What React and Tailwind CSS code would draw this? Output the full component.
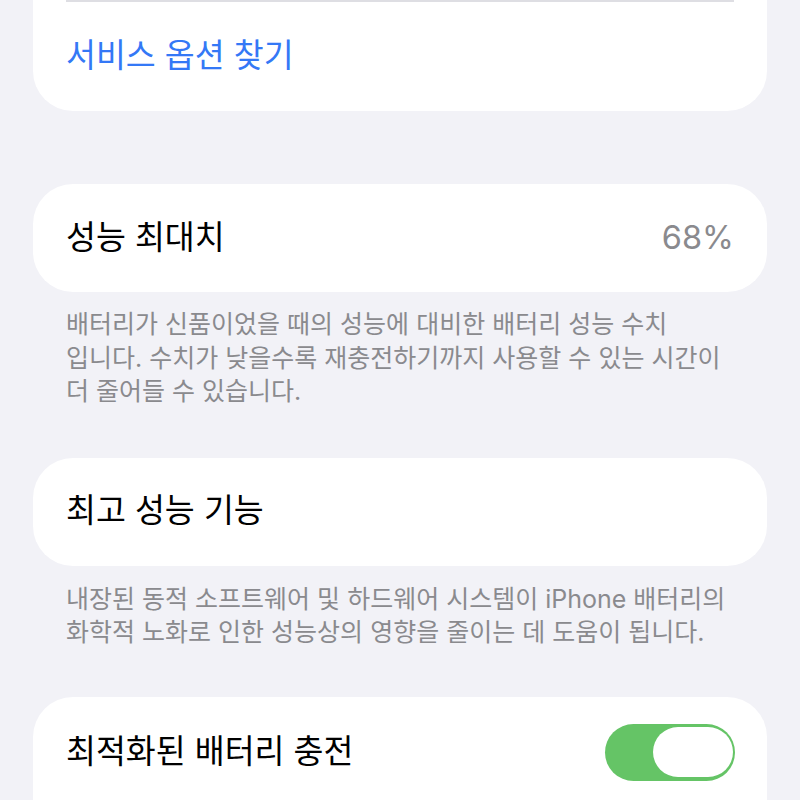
export default function App() {
  const font = { fontFamily: '"Inter", "Noto Sans CJK KR", sans-serif' };
  return (
    <div
      className="h-[800px] w-[800px] overflow-hidden bg-[#f2f2f7] px-[33px]"
      style={font}
    >
      {/* top card */}
      <div className="rounded-b-[40px] bg-white">
        <div className="mx-[33px] h-[2px] bg-[#dedee3]" />
        <div className="flex h-[109px] items-center px-[33px] text-[32.5px] text-[#3478f6]">
          서비스 옵션 찾기
        </div>
      </div>

      {/* 성능 최대치 */}
      <div className="mt-[73px] flex h-[108px] items-center justify-between rounded-[40px] bg-white px-[33px] text-[32.5px]">
        <span className="text-black">성능 최대치</span>
        <span className="text-[#8a8a8e]">68%</span>
      </div>
      <div className="px-[33px] pt-[16px] text-[25px] leading-[33.5px] text-[#8a8a8e]">
        <div className="whitespace-nowrap">배터리가 신품이었을 때의 성능에 대비한 배터리 성능 수치</div>
        <div className="whitespace-nowrap">입니다. 수치가 낮을수록 재충전하기까지 사용할 수 있는 시간이</div>
        <div className="whitespace-nowrap">더 줄어들 수 있습니다.</div>
      </div>

      {/* 최고 성능 기능 */}
      <div className="mt-[49px] flex h-[108px] items-center rounded-[40px] bg-white px-[33px] text-[32.5px] text-black">
        최고 성능 기능
      </div>
      <div className="px-[33px] pt-[17px] text-[25px] leading-[33.5px] text-[#8a8a8e]">
        <div className="whitespace-nowrap">내장된 동적 소프트웨어 및 하드웨어 시스템이 iPhone 배터리의</div>
        <div className="whitespace-nowrap">화학적 노화로 인한 성능상의 영향을 줄이는 데 도움이 됩니다.</div>
      </div>

      {/* 최적화된 배터리 충전 */}
      <div className="mt-[47px] h-[140px] rounded-t-[40px] bg-white">
        <div className="flex h-[111px] items-center justify-between pl-[33px] pr-[32px]">
          <span className="text-[32.5px] text-black">최적화된 배터리 충전</span>
          <div className="flex h-[57px] w-[130px] items-center justify-end rounded-full bg-[#65c466] pr-[2px]">
            <div className="h-[50px] w-[80px] rounded-full bg-white" />
          </div>
        </div>
      </div>
    </div>
  );
}
